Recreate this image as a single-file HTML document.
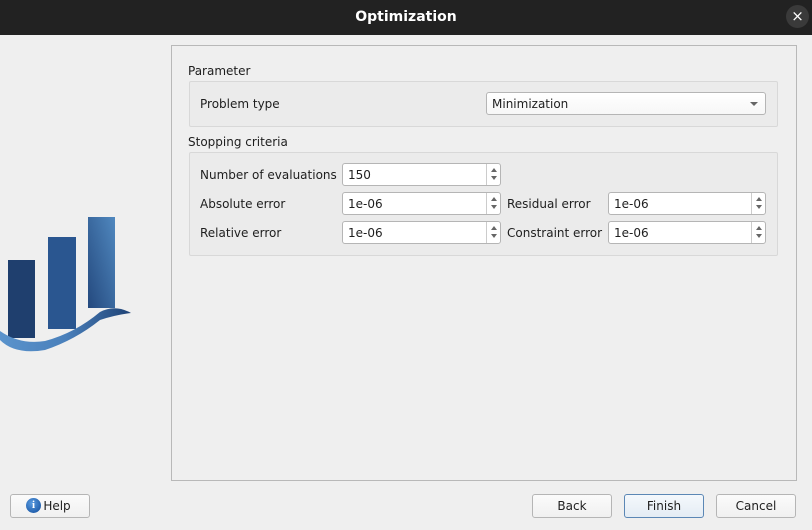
<!DOCTYPE html>
<html><head><meta charset="utf-8"><style>
*{box-sizing:border-box;margin:0;padding:0}
body{width:812px;height:530px;background:#efefef;position:relative;overflow:hidden;font-family:"DejaVu Sans","Liberation Sans",sans-serif;font-size:12px;color:#1e1e1e}
.a{position:absolute}
.t{margin-top:1px}
.title{left:0;top:0;width:812px;height:35px;background:#222;color:#fff;font-weight:bold;font-size:14px;text-align:center;line-height:35px}
.close{left:786px;top:5px;width:23px;height:23px;border-radius:50%;background:#3a3a3a;color:#fff;font-size:15px;text-align:center;line-height:22px}
.frame{left:171px;top:45px;width:626px;height:436px;border:1px solid #b8b8b8}
.grp{border:1px solid #d8d8d8;background:#ebebeb;border-radius:2px}
.inp{background:#fff;border:1px solid #b5b5b5;border-radius:3px;height:23px;line-height:22px;padding-left:5px}
.sp{position:absolute;right:0;top:0;width:14px;height:21px;border-left:1px solid #ccc}
.sp:before{content:"";position:absolute;left:4px;top:4px;border:3px solid transparent;border-bottom:4px solid #666;border-top:0}
.sp:after{content:"";position:absolute;left:4px;top:12px;border:3px solid transparent;border-top:4px solid #666;border-bottom:0}
.btn{height:24px;border:1px solid #b5b5b5;border-radius:3px;background:linear-gradient(#fbfbfb,#f0f0f0);text-align:center;line-height:22px;width:80px}
</style></head><body>
<div class="a title">Optimization</div>
<div class="a close">×</div>
<svg class="a" style="left:0;top:200px" width="140" height="160" viewBox="0 200 140 160">
<defs><linearGradient id="g" x1="0" x2="1" y1="1" y2="0"><stop offset="0" stop-color="#24497e"/><stop offset="1" stop-color="#5088bf"/></linearGradient>
<linearGradient id="w" x1="0" x2="1"><stop offset="0" stop-color="#5a93cc"/><stop offset="0.5" stop-color="#4a80bb"/><stop offset="1" stop-color="#1f4275"/></linearGradient></defs>
<rect x="8" y="260" width="27" height="78" fill="#1f3f6e"/>
<rect x="48" y="237" width="28" height="92" fill="#2a5690"/>
<rect x="88" y="217" width="27" height="91" fill="url(#g)"/>
<path d="M0 331 Q20 345 45 341 Q75 333 100 312 Q115 304 131 313 Q115 315 100 320 Q75 340 45 350 Q15 355 0 340Z" fill="url(#w)"/>
</svg>
<div class="a frame"></div>
<div class="a t" style="left:188px;top:63px">Parameter</div>
<div class="a grp" style="left:189px;top:81px;width:589px;height:46px"></div>
<div class="a t" style="left:200px;top:96px">Problem type</div>
<div class="a inp" style="left:486px;top:92px;width:280px;background:linear-gradient(#fff,#f7f7f7)">Minimization<span class="a" style="right:7px;top:9px;border:4px solid transparent;border-top:4px solid #666;border-bottom:0"></span></div>
<div class="a t" style="left:188px;top:134px">Stopping criteria</div>
<div class="a grp" style="left:189px;top:152px;width:589px;height:104px"></div>
<div class="a t" style="left:200px;top:167px">Number of evaluations</div>
<div class="a inp" style="left:342px;top:163px;width:159px">150<div class="sp"></div></div>
<div class="a t" style="left:200px;top:196px">Absolute error</div>
<div class="a inp" style="left:342px;top:192px;width:159px">1e-06<div class="sp"></div></div>
<div class="a t" style="left:200px;top:225px">Relative error</div>
<div class="a inp" style="left:342px;top:221px;width:159px">1e-06<div class="sp"></div></div>
<div class="a t" style="left:507px;top:196px">Residual error</div>
<div class="a inp" style="left:608px;top:192px;width:158px">1e-06<div class="sp"></div></div>
<div class="a t" style="left:507px;top:225px">Constraint error</div>
<div class="a inp" style="left:608px;top:221px;width:158px">1e-06<div class="sp"></div></div>
<div class="a btn" style="left:10px;top:494px;width:80px;padding-left:14px">Help</div>
<div class="a" style="left:26px;top:498px;width:15px;height:15px;border-radius:50%;background:radial-gradient(circle at 40% 35%,#5a9be0,#0d4a9a);color:#fff;font-weight:bold;font-size:11px;text-align:center;line-height:15px;font-family:'Liberation Serif',serif">i</div>
<div class="a btn" style="left:532px;top:494px">Back</div>
<div class="a btn" style="left:624px;top:494px;border-color:#5b87b5;background:linear-gradient(#f4f8fc,#e4ecf4)">Finish</div>
<div class="a btn" style="left:716px;top:494px">Cancel</div>
</body></html>
